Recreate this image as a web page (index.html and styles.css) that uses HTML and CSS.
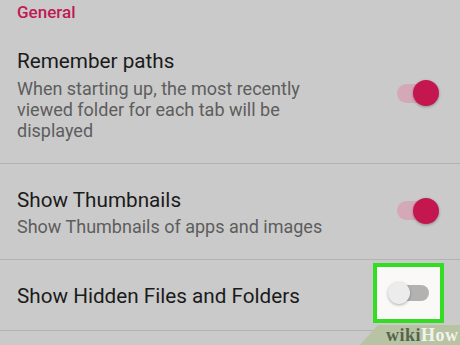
FILE: index.html
```html
<!DOCTYPE html>
<html>
<head>
<meta charset="utf-8">
<link rel="stylesheet" href="styles.css">
</head>
<body>
<div class="screen">
  <div class="section-header">General</div>
  <div class="item">
    <div class="text">
      <div class="title">Remember paths</div>
      <div class="summary">When starting up, the most recently viewed folder for each tab will be displayed</div>
    </div>
    <div class="switch on"><span class="track"></span><span class="thumb"></span></div>
  </div>
  <div class="divider"></div>
  <div class="item">
    <div class="text">
      <div class="title">Show Thumbnails</div>
      <div class="summary">Show Thumbnails of apps and images</div>
    </div>
    <div class="switch on"><span class="track"></span><span class="thumb"></span></div>
  </div>
  <div class="divider"></div>
  <div class="item single">
    <div class="text">
      <div class="title">Show Hidden Files and Folders</div>
    </div>
    <div class="highlight">
      <div class="switch off"><span class="track"></span><span class="thumb"></span></div>
    </div>
  </div>
  <div class="divider"></div>
  <div class="watermark"><span class="wiki">wiki</span><span class="how">How</span></div>
</div>
</body>
</html>
```

FILE: styles.css
```css
html, body {
  margin: 0;
  padding: 0;
}
body {
  width: 460px;
  height: 345px;
  overflow: hidden;
  background: #cacaca;
  font-family: Roboto, "Noto Sans", sans-serif;
}
.screen {
  position: relative;
  width: 460px;
  height: 345px;
  overflow: hidden;
}
.section-header {
  padding: 2px 17px 3px;
  font-size: 17px;
  line-height: 20px;
  font-weight: 500;
  color: #c01a55;
}
.item {
  display: flex;
  align-items: center;
  padding: 23px 21px 22px 17px;
}
.item.single {
  padding-bottom: 20.5px;
  padding-right: 16px;
}
.text {
  flex: 1;
  min-width: 0;
}
.title {
  font-size: 20.7px;
  line-height: 26px;
  color: #1b1b1b;
}
.summary {
  margin-top: 3.5px;
  font-size: 18px;
  line-height: 21px;
  color: #5d5d5d;
  max-width: 310px;
}
.divider {
  height: 1px;
  background: #b3b3b3;
}
.switch {
  position: relative;
  flex: none;
  margin-top: -2px;
}
.switch.on {
  width: 42px;
  height: 26px;
}
.switch.on .track {
  position: absolute;
  left: 0;
  top: 3.5px;
  width: 38px;
  height: 19px;
  border-radius: 10px;
  background: #d5a8b8;
}
.switch.on .thumb {
  position: absolute;
  right: 0;
  top: 0;
  width: 26px;
  height: 26px;
  border-radius: 50%;
  background: #c4164f;
  box-shadow: 0 1px 3px rgba(0, 0, 0, 0.3);
}
.highlight {
  flex: none;
  width: 63px;
  height: 52px;
  border: 4px solid #33de22;
  background: #fbf8f8;
  display: flex;
  align-items: center;
  justify-content: center;
  margin: -20px 0 -14px;
}
.switch.off {
  width: 41px;
  height: 22px;
  margin-top: 0;
}
.switch.off .track {
  position: absolute;
  right: 0;
  top: 3px;
  width: 38px;
  height: 16px;
  border-radius: 8px;
  background: #b2b2b2;
}
.switch.off .thumb {
  position: absolute;
  left: 0;
  top: 0;
  width: 22px;
  height: 22px;
  border-radius: 50%;
  background: #ececec;
  box-shadow: 0 1px 3px rgba(0, 0, 0, 0.3);
}
.watermark {
  position: absolute;
  right: 0;
  bottom: 0;
  width: 100px;
  height: 20px;
  background: #b7c3a2;
  clip-path: polygon(18px 0, 100% 0, 100% 100%, 0 100%);
  font-family: "Liberation Serif", serif;
  font-weight: bold;
  font-size: 18px;
  line-height: 20px;
  padding-left: 26px;
  box-sizing: border-box;
  letter-spacing: 0.5px;
}
.wiki {
  color: #56634f;
}
.how {
  color: #f1f3ec;
}
```
